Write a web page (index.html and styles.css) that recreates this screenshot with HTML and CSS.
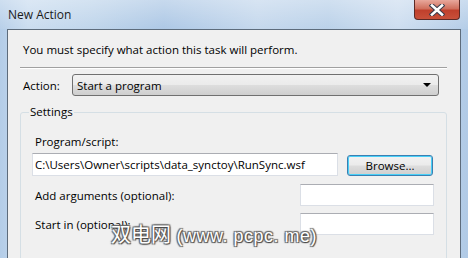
FILE: index.html
```html
<!DOCTYPE html>
<html lang="en">
<head>
    <meta charset="UTF-8">
    <title>New Action</title>
    <link rel="stylesheet" href="styles.css">
</head>
<body>

<div class="window">
    <!-- Title bar -->
    <div class="titlebar">
        <span class="title">New Action</span>
        <div class="close-btn">
            <svg width="16" height="12" viewBox="0 0 16 12">
                <path d="M3 1.5 L13 10.5 M13 1.5 L3 10.5" stroke="#3a3a4a" stroke-width="4.6" stroke-linecap="square"/>
                <path d="M3 1.5 L13 10.5 M13 1.5 L3 10.5" stroke="#ffffff" stroke-width="2.6" stroke-linecap="square"/>
            </svg>
        </div>
    </div>

    <!-- Client area -->
    <div class="client">
        <p class="intro">You must specify what action this task will perform.</p>
        <div class="separator"></div>

        <div class="action-row">
            <span class="label">Action:</span>
            <div class="combo">
                <span>Start a program</span>
                <span class="combo-arrow"></span>
            </div>
        </div>

        <fieldset class="settings">
            <legend>Settings</legend>
            <div class="field-label">Program/script:</div>
            <div class="program-row">
                <div class="textbox wide">C:\Users\Owner\scripts\data_synctoy\RunSync.wsf</div>
                <button class="browse-btn">Browse...</button>
            </div>
            <div class="opt-row">
                <span class="label">Add arguments (optional):</span>
                <div class="textbox short"></div>
            </div>
            <div class="opt-row">
                <span class="label">Start in (optional):</span>
                <div class="textbox short"></div>
            </div>
        </fieldset>
    </div>

    <!-- watermark over the dialog -->
    <div class="watermark"><span class="wm-cjk">双电网</span> (www. pcpc. me)</div>
</div>

</body>
</html>
```

FILE: styles.css
```css
* {
    margin: 0;
    padding: 0;
    box-sizing: border-box;
}

body {
    width: 468px;
    height: 258px;
    overflow: hidden;
    font-family: 'Open Sans', 'Noto Sans', sans-serif;
    font-size: 11.5px;
    color: #000;
}

.window {
    position: relative;
    width: 468px;
    height: 258px;
    background: linear-gradient(90deg, #b4cde8 0%, #c8dbef 6%, #bcd3ea 20%, #a9c5e4 35%, #c2d6ec 55%, #b7cfe8 70%, #cbdcef 85%, #b0cae6 100%);
}

/* Title bar */
.titlebar {
    height: 29px;
    display: flex;
    justify-content: space-between;
    align-items: flex-start;
    padding: 0 8px 0 8px;
    background: linear-gradient(180deg, rgba(255,255,255,0.35), rgba(255,255,255,0.05));
}

.title {
    margin-top: 6px;
    font-size: 12px;
    color: #1a1a1a;
}

.close-btn {
    width: 46px;
    height: 20px;
    display: flex;
    align-items: center;
    justify-content: center;
    border: 1px solid #5c2a26;
    border-top: none;
    border-radius: 0 0 4px 4px;
    background: linear-gradient(180deg, #e8a89c 0%, #d0705e 45%, #c0402c 55%, #c8503a 100%);
}

/* Client area */
.client {
    margin: 0 7px;
    height: 240px;
    border: 1px solid #5d6c7c;
    border-bottom: none;
    background: #f0f0f0;
}

.intro {
    margin-top: 12px;
    padding-left: 15px;
    line-height: 16px;
}

.separator {
    margin: 9px 13px 0 12px;
    height: 2px;
    border-top: 1px solid #a0a0a0;
    border-bottom: 1px solid #ffffff;
}

.action-row {
    display: flex;
    align-items: center;
    margin-top: 5px;
    padding-left: 15px;
    padding-right: 21px;
}

.action-row .label {
    width: 49px;
}

.combo {
    flex: 1;
    height: 22px;
    display: flex;
    align-items: center;
    justify-content: space-between;
    padding: 0 7px 0 4px;
    border: 1px solid #707070;
    border-radius: 3px;
    background: linear-gradient(180deg, #f2f2f2 0%, #ebebeb 48%, #dddddd 52%, #cfcfcf 100%);
}

.combo-arrow {
    width: 0;
    height: 0;
    border-left: 4px solid transparent;
    border-right: 4px solid transparent;
    border-top: 4px solid #000;
}

/* Settings group */
.settings {
    margin: 8px 13px 0 12px;
    border: 1px solid #d5dfe5;
    border-radius: 3px;
    height: 160px;
}

.settings legend {
    margin-left: 8px;
    padding: 0 1px;
    line-height: 16px;
}

.field-label {
    margin-top: 14px;
    padding-left: 14px;
    line-height: 16px;
}

.program-row {
    display: flex;
    align-items: flex-start;
    margin-top: 3px;
    padding-left: 11px;
}

.textbox {
    height: 23px;
    background: #fff;
    border: 1px solid #dbdfe6;
    border-top-color: #abadb3;
    padding: 3px 2px;
    line-height: 16px;
    white-space: nowrap;
}

.textbox.wide {
    width: 306px;
}

.textbox.short {
    width: 134px;
    height: 22px;
}

.browse-btn {
    margin: 2px 0 0 9px;
    width: 86px;
    height: 21px;
    font: inherit;
    color: #000;
    border: 1px solid #3c7fb1;
    border-radius: 3px;
    background: linear-gradient(180deg, #f2f2f2 0%, #ebebeb 48%, #dddddd 52%, #cfcfcf 100%);
    box-shadow: inset 0 0 0 1px #48d0f8;
}

.opt-row {
    display: flex;
    justify-content: space-between;
    align-items: center;
    margin-top: 8px;
    padding: 0 12px 0 14px;
}

.opt-row + .opt-row {
    margin-top: 7px;
}

/* watermark */
.watermark {
    position: absolute;
    left: 111px;
    top: 221px;
    font-family: 'Liberation Sans', sans-serif;
    font-size: 18px;
    line-height: 26px;
    letter-spacing: 0.5px;
    color: #fff;
    text-shadow: 1px 1px 1px #444, -1px -1px 1px #666, 1px -1px 1px #666, -1px 1px 1px #666;
}

.wm-cjk {
    font-family: 'Noto Sans CJK SC', sans-serif;
    font-size: 20px;
    letter-spacing: 0;
}
```
